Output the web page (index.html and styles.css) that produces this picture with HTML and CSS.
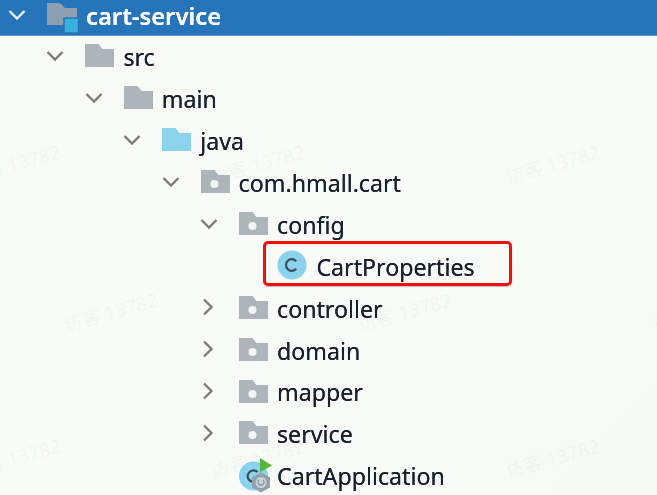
FILE: index.html
```html
<!DOCTYPE html>
<html lang="en">
<head>
<meta charset="utf-8">
<title>cart-service</title>
<link rel="stylesheet" href="styles.css">
</head>
<body>
<svg class="defs" aria-hidden="true">
  <symbol id="down" viewBox="0 0 18 12"><path d="M1.5 2 9 9.500 16.500 2" fill="none" stroke="currentColor" stroke-width="2.400"/></symbol>
  <symbol id="right" viewBox="0 0 12 18"><path d="M2 1.500 9.500 9 2 16.500" fill="none" stroke="currentColor" stroke-width="2.400"/></symbol>
  <symbol id="folder" viewBox="0 0 29 23"><path d="M0 0H13.500L17.500 5H29V23H0Z" fill="currentColor"/></symbol>
  <symbol id="package" viewBox="0 0 29 23"><path d="M0 0H13.500L17.500 5H29V23H0Z" fill="currentColor"/><circle cx="13.500" cy="14" r="4" fill="#f4f6f3"/></symbol>
  <symbol id="class" viewBox="0 0 30 30"><circle cx="15" cy="15" r="14.500" fill="#8bd2ec"/><path d="M19.200 11.200A5.800 5.800 0 1 0 19.200 18.800" fill="none" stroke="#3d4b55" stroke-width="2.200"/></symbol>
</svg>

<main class="tree">
  <div class="row head d0">
    <svg class="chev down"><use href="#down"/></svg>
    <svg class="module" viewBox="0 0 32 30"><path d="M0 0H13L18 5H30V22H0Z" fill="#8d9fb1"/><rect x="17" y="15" width="14.500" height="15" fill="#38b3de" stroke="#2675bb" stroke-width="1.500"/></svg>
    <span class="label">cart-service</span>
  </div>
  <div class="row d1"><svg class="chev down"><use href="#down"/></svg><svg class="ico grey"><use href="#folder"/></svg><span class="label">src</span></div>
  <div class="row d2"><svg class="chev down"><use href="#down"/></svg><svg class="ico grey"><use href="#folder"/></svg><span class="label">main</span></div>
  <div class="row d3"><svg class="chev down"><use href="#down"/></svg><svg class="ico sky"><use href="#folder"/></svg><span class="label">java</span></div>
  <div class="row d4"><svg class="chev down"><use href="#down"/></svg><svg class="ico grey"><use href="#package"/></svg><span class="label">com.hmall.cart</span></div>
  <div class="row d5"><svg class="chev down"><use href="#down"/></svg><svg class="ico grey"><use href="#package"/></svg><span class="label">config</span></div>
  <div class="row d6"><span class="chev"></span><svg class="cls"><use href="#class"/></svg><span class="label">CartProperties</span><span class="mark"></span></div>
  <div class="row d5"><svg class="chev right"><use href="#right"/></svg><svg class="ico grey"><use href="#package"/></svg><span class="label">controller</span></div>
  <div class="row d5"><svg class="chev right"><use href="#right"/></svg><svg class="ico grey"><use href="#package"/></svg><span class="label">domain</span></div>
  <div class="row d5"><svg class="chev right"><use href="#right"/></svg><svg class="ico grey"><use href="#package"/></svg><span class="label">mapper</span></div>
  <div class="row d5"><svg class="chev right"><use href="#right"/></svg><svg class="ico grey"><use href="#package"/></svg><span class="label">service</span></div>
  <div class="row d5">
    <span class="chev"></span>
    <svg class="app" viewBox="0 0 33 36">
      <circle cx="14.500" cy="19" r="14.500" fill="#8bd2ec"/>
      <path d="M18.500 15A5.800 5.800 0 1 0 14 25" fill="none" stroke="#3d4b55" stroke-width="2.200"/>
      <path d="M21 1 33 8.500 21 15Z" fill="#55b53a"/>
      <path d="M22 15.500 31 20.500V30.500L22 35.500 13 30.500V20.500Z" fill="#949fa7"/>
      <circle cx="22" cy="25.500" r="5.500" fill="#c3d3d8"/>
      <path d="M24 23A3 3 0 1 1 20 23" fill="none" stroke="#8a959c" stroke-width="1.300"/>
    </svg>
    <span class="label">CartApplication</span>
  </div>
</main>

<div class="wm a">访客 13782</div>
<div class="wm b">访客 13782</div>
<div class="wm c">访客 13782</div>
<div class="wm d">访客 13782</div>
<div class="wm e">访客 13782</div>
<div class="wm f">访客 13782</div>
<div class="wm g">访客 13782</div>
<div class="wm h">访客 13782</div>
<div class="wm i">访客 13782</div>
<div class="wm j">访客 13782</div>
<div class="wm k">访客 13782</div>
<div class="wm l">访客 13782</div>
</body>
</html>
```
FILE: styles.css
```css
html, body {
  margin: 0;
  height: 100%;
  overflow: hidden;
}
body {
  position: relative;
  background: linear-gradient(135deg, #f8faf6 0%, #f9fbf8 50%, #f6f9f6 100%);
  font-family: "Noto Sans", "Noto Sans CJK SC", sans-serif;
  color: #18222e;
}
.defs {
  position: absolute;
  width: 0;
  height: 0;
}
.tree {
  display: flex;
  flex-direction: column;
  filter: blur(0.35px);
}
.row {
  display: flex;
  align-items: center;
  height: 41.9px;
  font-size: 23.2px;
  position: relative;
  text-shadow: 0 0 0.4px currentColor;
}
.head {
  height: 35px;
  box-sizing: border-box;
  padding-bottom: 6px;
  background: #2675bb;
  box-shadow: 0 1px 0 #5a9ad2;
  color: #fff;
  font-weight: 600;
  font-size: 23.8px;
}
.d0 { padding-left: 8px; }
.d1 { padding-left: 46.4px; }
.d2 { padding-left: 84.8px; }
.d3 { padding-left: 123.2px; }
.d4 { padding-left: 161.6px; }
.d5 { padding-left: 200px; }
.d6 { padding-left: 238.4px; }
.chev {
  flex: none;
  width: 18px;
  height: 12px;
  margin-right: 21px;
  color: #7b7b7b;
}
.chev.right {
  width: 12px;
  height: 18px;
  margin-left: 2px;
  margin-right: 25px;
}
.head .chev {
  color: #e6eef6;
}
.ico {
  flex: none;
  width: 29px;
  height: 23px;
  margin-right: 9px;
}
.grey { color: #adb5bb; }
.sky { color: #8bd2ec; }
.module {
  flex: none;
  width: 32px;
  height: 30px;
  margin-right: 7px;
  margin-top: 7px;
}
.cls {
  flex: none;
  width: 30px;
  height: 30px;
  margin-right: 9px;
}
.app {
  flex: none;
  width: 33px;
  height: 36px;
  margin-right: 5px;
}
.label {
  line-height: 1;
  white-space: nowrap;
  position: relative;
  top: 2px;
}
.mark {
  position: absolute;
  left: 263px;
  top: -3.5px;
  width: 249px;
  height: 45px;
  box-sizing: border-box;
  border: 3px solid #f00f0f;
  border-radius: 5px;
  box-shadow: 0 1px 1px rgba(90, 60, 60, 0.35);
}
.wm {
  position: absolute;
  font-size: 19px;
  line-height: 1;
  white-space: nowrap;
  color: rgba(40, 60, 60, 0.05);
  transform: rotate(-15.5deg);
  transform-origin: left bottom;
  pointer-events: none;
}
.a { left: 66px; top: 22px; }
.b { left: 360px; top: 22px; }
.c { left: 655px; top: 22px; }
.d { left: -31px; top: 168px; }
.e { left: 213px; top: 168px; }
.f { left: 508px; top: 168px; }
.g { left: 66px; top: 316px; }
.h { left: 360px; top: 316px; }
.i { left: 655px; top: 316px; }
.j { left: -31px; top: 462px; }
.k { left: 213px; top: 462px; }
.l { left: 508px; top: 462px; }
```
